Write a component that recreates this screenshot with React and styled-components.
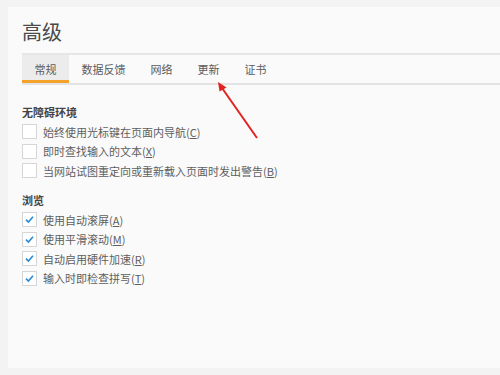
import React from "react"
import styled, { createGlobalStyle } from "styled-components"

const GlobalStyle = createGlobalStyle`
  html, body {
    margin: 0;
    padding: 0;
    background: #f3f3f3;
  }
  body {
    font-family: "Noto Sans CJK SC", "Noto Sans", sans-serif;
    color: #555;
  }
`

const Panel = styled.div`
  position: relative;
  margin: 7px 0 0 8px;
  height: 361px;
  background: #fafafa;
  padding: 13px 0 0 14px;
  box-sizing: border-box;
`

const Title = styled.h1`
  margin: 0 0 9px;
  font-size: 20px;
  line-height: 24px;
  font-weight: 400;
  color: #4a4a4a;
`

const TabBar = styled.div`
  display: flex;
  height: 28px;
  border-top: 2px solid #e6e6e6;
  border-bottom: 2px solid #e3e3e3;
`

const Tab = styled.div`
  display: flex;
  align-items: center;
  padding: 3px 12.5px 0;
  font-size: 11px;
  color: #5a5a5a;
  box-sizing: border-box;
  background: ${p => (p.active ? "#ececec" : "transparent")};
  border-bottom: 3px solid ${p => (p.active ? "#f5a22a" : "transparent")};
`

const Section = styled.section`
  margin-top: ${p => p.top}px;
`

const Heading = styled.h2`
  margin: 0 0 2px;
  font-size: 11px;
  line-height: 16px;
  font-weight: 700;
  color: #444;
`

const Row = styled.label`
  display: flex;
  align-items: center;
  height: 19.5px;
  font-size: 11px;
  color: #5e5e5e;
`

const Box = styled.span`
  display: flex;
  align-items: center;
  justify-content: center;
  width: 15px;
  height: 15px;
  box-sizing: border-box;
  border: 1px solid #d6d6d6;
  background: #fff;
  margin-right: 6px;
`

const Key = styled.span`
  text-decoration: underline;
`

const Arrow = styled.svg`
  position: absolute;
  left: -8px;
  top: -7px;
  pointer-events: none;
`

const Check = () => (
  <svg width="11" height="11" viewBox="0 0 11 11">
    <path d="M2 5.6 L4.4 8 L9 2.8" fill="none" stroke="#2a8ad4" strokeWidth="1.6" />
  </svg>
)

const Option = ({ checked, text, k }) => (
  <Row>
    <Box>{checked && <Check />}</Box>
    <span>
      {text}(<Key>{k}</Key>)
    </span>
  </Row>
)

const tabs = ["常规", "数据反馈", "网络", "更新", "证书"]

const App = () => (
  <>
    <GlobalStyle />
    <Panel>
      <Title>高级</Title>
      <TabBar>
        {tabs.map((t, i) => (
          <Tab key={t} active={i === 0}>
            {t}
          </Tab>
        ))}
      </TabBar>
      <Section top={19}>
        <Heading>无障碍环境</Heading>
        <Option text="始终使用光标键在页面内导航" k="C" />
        <Option text="即时查找输入的文本" k="X" />
        <Option text="当网站试图重定向或重新载入页面时发出警告" k="B" />
      </Section>
      <Section top={11.5}>
        <Heading>浏览</Heading>
        <Option checked text="使用自动滚屏" k="A" />
        <Option checked text="使用平滑滚动" k="M" />
        <Option checked text="自动启用硬件加速" k="R" />
        <Option checked text="输入时即检查拼写" k="T" />
      </Section>
      <Arrow width="500" height="375" viewBox="0 0 500 375">
        <line x1="257" y1="138" x2="222" y2="88" stroke="#e2231f" strokeWidth="2" />
        <path d="M218 82 L226.5 87.5 L219.5 91.5 Z" fill="#e2231f" />
      </Arrow>
    </Panel>
  </>
)

export default App
